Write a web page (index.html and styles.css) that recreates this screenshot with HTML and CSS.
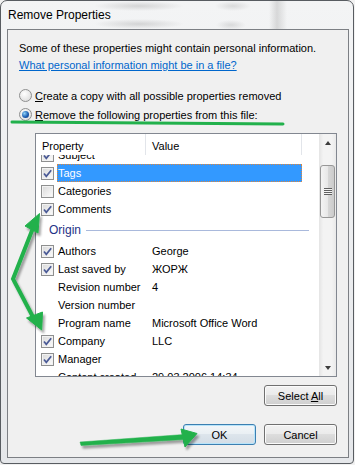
FILE: index.html
```html
<!DOCTYPE html>
<html lang="en">
<head>
    <meta charset="UTF-8">
    <meta name="viewport" content="width=device-width, initial-scale=1.0">
    <title>Remove Properties</title>
    <link rel="stylesheet" href="styles.css">
</head>
<body>
<div class="screen">
    <div class="window">
        <div class="titlebar">Remove Properties</div>
        <div class="client">
            <p class="intro">Some of these properties might contain personal information.</p>
            <a class="help-link" href="#">What personal information might be in a file?</a>
            <div class="options">
                <div class="option"><span class="radio"></span><span><u>C</u>reate a copy with all possible properties removed</span></div>
                <div class="option"><span class="radio checked"></span><span><u>R</u>emove the following properties from this file:</span></div>
            </div>
            <div class="listbox">
                <div class="list-main">
                    <div class="list-header">
                        <div class="col col-prop">Property</div>
                        <div class="col col-val">Value</div>
                        <div class="col col-rest"></div>
                    </div>
                    <div class="list-body">
                        <div class="list-scroll">
                            <div class="row"><span class="check on"><svg viewBox="0 0 11 11"><path d="M2 5.5 L4.3 8.3 L9.2 2.2"/></svg></span><div class="cells"><span class="cell-prop">Subject</span><span class="cell-val"></span></div></div>
                            <div class="row selected"><span class="check on"><svg viewBox="0 0 11 11"><path d="M2 5.5 L4.3 8.3 L9.2 2.2"/></svg></span><div class="cells"><span class="cell-prop">Tags</span><span class="cell-val"></span></div></div>
                            <div class="row"><span class="check"></span><div class="cells"><span class="cell-prop">Categories</span><span class="cell-val"></span></div></div>
                            <div class="row"><span class="check on"><svg viewBox="0 0 11 11"><path d="M2 5.5 L4.3 8.3 L9.2 2.2"/></svg></span><div class="cells"><span class="cell-prop">Comments</span><span class="cell-val"></span></div></div>
                            <div class="group"><span>Origin</span><span class="group-line"></span></div>
                            <div class="row"><span class="check on"><svg viewBox="0 0 11 11"><path d="M2 5.5 L4.3 8.3 L9.2 2.2"/></svg></span><div class="cells"><span class="cell-prop">Authors</span><span class="cell-val">George</span></div></div>
                            <div class="row"><span class="check on"><svg viewBox="0 0 11 11"><path d="M2 5.5 L4.3 8.3 L9.2 2.2"/></svg></span><div class="cells"><span class="cell-prop">Last saved by</span><span class="cell-val">ЖОРЖ</span></div></div>
                            <div class="row"><span class="check none"></span><div class="cells"><span class="cell-prop">Revision number</span><span class="cell-val">4</span></div></div>
                            <div class="row"><span class="check none"></span><div class="cells"><span class="cell-prop">Version number</span><span class="cell-val"></span></div></div>
                            <div class="row"><span class="check none"></span><div class="cells"><span class="cell-prop">Program name</span><span class="cell-val">Microsoft Office Word</span></div></div>
                            <div class="row"><span class="check on"><svg viewBox="0 0 11 11"><path d="M2 5.5 L4.3 8.3 L9.2 2.2"/></svg></span><div class="cells"><span class="cell-prop">Company</span><span class="cell-val">LLC</span></div></div>
                            <div class="row"><span class="check on"><svg viewBox="0 0 11 11"><path d="M2 5.5 L4.3 8.3 L9.2 2.2"/></svg></span><div class="cells"><span class="cell-prop">Manager</span><span class="cell-val"></span></div></div>
                            <div class="row"><span class="check none"></span><div class="cells"><span class="cell-prop">Content created</span><span class="cell-val">29.03.2006 14:34</span></div></div>
                        </div>
                    </div>
                </div>
                <div class="scrollbar">
                    <div class="sb-btn"><span class="arrow-up"></span></div>
                    <div class="sb-track"><div class="sb-thumb"><span class="grip"></span></div></div>
                    <div class="sb-btn"><span class="arrow-down"></span></div>
                </div>
            </div>
            <div class="select-row"><button class="btn">Select <u>A</u>ll</button></div>
            <div class="footer">
                <button class="btn btn-default">OK</button>
                <button class="btn">Cancel</button>
            </div>
        </div>
    </div>

    <!-- green annotations drawn over the dialog -->
    <svg class="marks" width="355" height="465" viewBox="0 0 355 465">
        <defs>
            <filter id="shade" x="-20%" y="-20%" width="150%" height="150%">
                <feDropShadow dx="2" dy="3" stdDeviation="1.3" flood-color="#000" flood-opacity="0.35"/>
            </filter>
        </defs>
        <path d="M12 122 L283 124" stroke="#22b14c" stroke-width="3" stroke-linecap="round" fill="none"/>
        <g filter="url(#shade)" fill="#22b14c" stroke="#22b14c">
            <polyline points="33,228 13,279 33,317" stroke-width="4" fill="none" stroke-linejoin="miter"/>
            <polygon points="25,226 39.5,213.5 38,233" stroke-width="1"/>
            <polygon points="26.5,318 42.5,312 41.7,330" stroke-width="1"/>
            <polygon points="80,442 184,434.5 184,439.5 81,445.5" stroke-width="0.5"/>
            <polygon points="181,429 197,433.5 185,447" stroke-width="1"/>
        </g>
    </svg>
</div>
</body>
</html>
```

FILE: styles.css
```css
body {
    margin: 0;
    background: #f1f1f1;
    font-family: "Liberation Sans", Arial, sans-serif;
    font-size: 11px;
    color: #000;
}
.screen {
    position: relative;
    width: 355px;
    height: 465px;
    overflow: hidden;
}
.window {
    box-sizing: border-box;
    width: 354px;
    height: 464px;
    border: 1px solid #585c61;
    border-radius: 7px 7px 4px 4px;
    padding: 0 4px 5px 6px;
    background: linear-gradient(#f3f4f5, #e5e7ea);
}
.titlebar {
    height: 28px;
    line-height: 28px;
    padding-left: 1px;
    font-size: 12px;
    background:
        radial-gradient(ellipse 45px 5px at 132px 5px, rgba(140, 140, 140, 0.3), transparent),
        radial-gradient(ellipse 45px 5px at 132px 23px, rgba(140, 140, 140, 0.3), transparent),
        radial-gradient(ellipse 18px 5px at 226px 5px, rgba(140, 140, 140, 0.25), transparent),
        radial-gradient(ellipse 15px 5px at 224px 24px, rgba(140, 140, 140, 0.25), transparent),
        linear-gradient(to right, transparent 262px, rgba(150, 150, 150, 0.3) 270px, transparent 280px);
}
.client {
    box-sizing: border-box;
    height: 429px;
    border: 1px solid #7c7f84;
    background: #f0f0f0;
    padding: 10px 11px 0 11px;
}
.intro {
    margin: 0;
    line-height: 17px;
}
.help-link {
    display: block;
    width: max-content;
    line-height: 17px;
    color: #0066cc;
    text-decoration: underline;
}
.options {
    margin-top: 12px;
}
.option {
    height: 19px;
    display: flex;
    align-items: center;
}
.radio {
    box-sizing: border-box;
    width: 13px;
    height: 13px;
    margin-right: 3px;
    border: 1px solid #8e8f8f;
    border-radius: 50%;
    background: radial-gradient(circle at 40% 35%, #ffffff, #d6d6d6);
    display: flex;
    align-items: center;
    justify-content: center;
}
.radio.checked::after {
    content: "";
    width: 7px;
    height: 7px;
    border-radius: 50%;
    background: radial-gradient(circle at 35% 35%, #8fd3f8, #1d5fb3 55%, #0b2f78);
}
.listbox {
    box-sizing: border-box;
    height: 244px;
    margin: 9px 0 0 16px;
    border: 1px solid #828790;
    background: #fff;
    display: flex;
}
.list-main {
    width: 283px;
    display: flex;
    flex-direction: column;
}
.list-header {
    height: 21px;
    display: flex;
    background: #fff;
}
.col {
    box-sizing: border-box;
    padding: 2px 0 0 6px;
    display: flex;
    align-items: center;
}
.col-prop {
    width: 110px;
    border-right: 1px solid #e2e5ea;
}
.col-val {
    width: 156px;
    border-right: 1px solid #e2e5ea;
}
.col-rest {
    flex: 1;
}
.list-body {
    flex: 1;
    overflow: hidden;
}
.list-scroll {
    margin-top: -9px;
}
.row {
    height: 18px;
    display: flex;
    align-items: center;
}
.check {
    box-sizing: border-box;
    width: 13px;
    height: 13px;
    margin: 0 3px 0 5px;
    border: 1px solid #8e8f8f;
    background: linear-gradient(135deg, #d8d8d8, #fdfdfd);
    box-shadow: inset 0 0 0 1px #f2f2f2;
    display: flex;
}
.check svg {
    width: 11px;
    height: 11px;
    fill: none;
    stroke: #4a5a96;
    stroke-width: 1.7;
}
.check.none {
    visibility: hidden;
}
.cells {
    box-sizing: border-box;
    width: 245px;
    height: 18px;
    display: flex;
    align-items: center;
}
.cell-prop {
    width: 89px;
    padding-left: 1px;
    box-sizing: border-box;
    white-space: nowrap;
}
.cell-val {
    padding-left: 6px;
    white-space: nowrap;
}
.row.selected .cells {
    background: #3399ff;
    color: #fff;
    outline: 1px dotted #e0863a;
    outline-offset: -1px;
}
.group {
    height: 24px;
    display: flex;
    align-items: center;
    padding-left: 13px;
    font-size: 12px;
    color: #1e3287;
}
.group-line {
    flex: 1;
    height: 1px;
    margin: 0 10px 0 5px;
    background: #a9b9dc;
}
.scrollbar {
    width: 17px;
    display: flex;
    flex-direction: column;
    background: linear-gradient(to right, #e4e4e4, #f3f3f3 25%, #f3f3f3 75%, #e9e9e9);
}
.sb-btn {
    height: 17px;
    display: flex;
    align-items: center;
    justify-content: center;
}
.arrow-up {
    border-left: 3.5px solid transparent;
    border-right: 3.5px solid transparent;
    border-bottom: 4px solid #3c3c3c;
}
.arrow-down {
    border-left: 3.5px solid transparent;
    border-right: 3.5px solid transparent;
    border-top: 4px solid #3c3c3c;
}
.sb-track {
    flex: 1;
    padding-top: 14px;
}
.sb-thumb {
    box-sizing: border-box;
    height: 53px;
    margin: 0 1px;
    border: 1px solid #979797;
    border-radius: 3px;
    background: linear-gradient(to right, #f4f4f4, #e8e8e8 50%, #d8d8d8 51%, #cbcbcb);
    display: flex;
    align-items: center;
    justify-content: center;
}
.grip {
    width: 8px;
    height: 7px;
    background: repeating-linear-gradient(#5f5f5f 0 1px, #f4f4f4 1px 2px);
}
.select-row {
    margin-top: 8px;
    display: flex;
    justify-content: flex-end;
}
.footer {
    margin-top: 18px;
    display: flex;
    justify-content: flex-end;
    gap: 8px;
}
.btn {
    box-sizing: border-box;
    width: 73px;
    height: 21px;
    padding: 0;
    border: 1px solid #707070;
    border-radius: 3px;
    background: linear-gradient(#f2f2f2, #ebebeb 45%, #dddddd 50%, #cfcfcf);
    box-shadow: inset 0 0 0 1px #fbfbfb;
    font-family: "Liberation Sans", Arial, sans-serif;
    font-size: 11px;
    color: #000;
}
.btn-default {
    border-color: #3c7fb1;
    background: linear-gradient(#f3f6f9, #eaf0f4 45%, #dde5ec 50%, #d3dde6);
    box-shadow: inset 0 0 0 1px #b8e4fa;
}
.marks {
    position: absolute;
    top: 0;
    left: 0;
    pointer-events: none;
}
```
